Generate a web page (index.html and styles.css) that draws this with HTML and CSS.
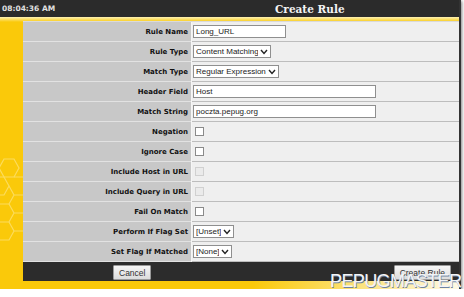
FILE: index.html
```html
<!DOCTYPE html>
<html>
<head>
    <title>Create Rule</title>
    <link rel="stylesheet" href="styles.css">
</head>
<body>
    <div class="frame">
        <div class="topbar">
            <span class="clock">08:04:36 AM</span>
            <span class="title">Create Rule</span>
        </div>
        <div class="stage">
            <form class="rule-form">
                <div class="row">
                    <label>Rule Name</label>
                    <div class="val"><input type="text" class="short" value="Long_URL"></div>
                </div>
                <div class="row">
                    <label>Rule Type</label>
                    <div class="val"><select class="sel-type"><option>Content Matching</option></select></div>
                </div>
                <div class="row">
                    <label>Match Type</label>
                    <div class="val"><select class="sel-match"><option>Regular Expression</option></select></div>
                </div>
                <div class="row">
                    <label>Header Field</label>
                    <div class="val"><input type="text" class="long" value="Host"></div>
                </div>
                <div class="row">
                    <label>Match String</label>
                    <div class="val"><input type="text" class="long" value="poczta.pepug.org"></div>
                </div>
                <div class="row">
                    <label>Negation</label>
                    <div class="val"><input type="checkbox"></div>
                </div>
                <div class="row">
                    <label>Ignore Case</label>
                    <div class="val"><input type="checkbox"></div>
                </div>
                <div class="row">
                    <label>Include Host in URL</label>
                    <div class="val"><input type="checkbox" disabled></div>
                </div>
                <div class="row">
                    <label>Include Query in URL</label>
                    <div class="val"><input type="checkbox" disabled></div>
                </div>
                <div class="row">
                    <label>Fail On Match</label>
                    <div class="val"><input type="checkbox"></div>
                </div>
                <div class="row">
                    <label>Perform If Flag Set</label>
                    <div class="val"><select class="sel-flag"><option>[Unset]</option></select></div>
                </div>
                <div class="row">
                    <label>Set Flag If Matched</label>
                    <div class="val"><select class="sel-flag2"><option>[None]</option></select></div>
                </div>
                <div class="actions">
                    <button type="button" class="btn">Cancel</button>
                    <button type="button" class="btn">Create Rule</button>
                </div>
            </form>
            <div class="watermark">PEPUGMASTER</div>
        </div>
    </div>
</body>
</html>
```

FILE: styles.css
```css
body {
    margin: 0;
    background-color: #fff;
    font-family: "DejaVu Sans", Verdana, sans-serif;
}
.frame {
    width: 459px;
    height: 289px;
    border-right: 2px solid #333;
    box-shadow: 1px 1px 3px rgba(0,0,0,0.5);
    display: flex;
    flex-direction: column;
}
.topbar {
    height: 17px;
    background-color: #2b2b2b;
    display: flex;
    align-items: center;
}
.clock {
    width: 275px;
    padding-left: 2px;
    box-sizing: border-box;
    color: #e0e0e0;
    font-size: 7.5px;
    font-weight: bold;
}
.title {
    color: #f4f4f4;
    font-family: "DejaVu Serif", Georgia, serif;
    font-weight: bold;
    font-size: 10.5px;
}
.stage {
    position: relative;
    flex: 1;
    padding: 4px 0 8px 23px;
    background-color: #fac90a;
    background-image:
        linear-gradient(to bottom, #fdf1b4 0, rgba(250,201,10,0) 5px),
        linear-gradient(to right, rgba(255,255,255,0) 55%, rgba(255,255,255,0.9) 100%),
        url("data:image/svg+xml,%3Csvg xmlns='http://www.w3.org/2000/svg' width='24' height='110'%3E%3Cg fill='none' stroke='%23fcdc5c' stroke-width='1.2'%3E%3Cpath d='M4 2 L14 2 L19 11 L14 20 L4 20 L-1 11 Z'/%3E%3Cpath d='M-5 20 L4 20 L9 29 L4 38 L-5 38'/%3E%3Cpath d='M14 20 L24 20 M14 38 L24 38 M9 29 L14 38 L9 47 L-1 47 L-6 38'/%3E%3Cpath d='M9 47 L14 56 L9 65 L-1 65 L-6 56 M14 56 L24 56'/%3E%3Cpath d='M9 65 L14 74 L9 83 L-1 83 M14 74 L24 74'/%3E%3C/g%3E%3C/svg%3E");
    background-size: 100% 100%, 100% 8px, 24px 110px;
    background-position: 0 0, 0 100%, 0 140px;
    background-repeat: no-repeat, no-repeat, no-repeat;
}
.rule-form {
    margin: 0;
    border-top: 1px solid #dadada;
}
.row {
    display: grid;
    grid-template-columns: 168px 1fr;
    column-gap: 1px;
    background-color: #f6f6f6;
}
.row label {
    height: 19px;
    border-bottom: 1px solid #e2e2e2;
    background-color: #c8c8c8;
    color: #111;
    font-size: 7px;
    font-weight: bold;
    display: flex;
    align-items: center;
    justify-content: flex-end;
    padding-right: 3px;
}
.val {
    height: 19px;
    border-bottom: 1px solid #bdbdbd;
    background-color: #efefef;
    display: flex;
    align-items: center;
    padding-left: 1px;
}
input[type=text], select {
    height: 13px;
    box-sizing: border-box;
    border: 1px solid #8f8f8f;
    background-color: #fff;
    font-family: "Liberation Sans", Arial, sans-serif;
    font-size: 8px;
    color: #222;
    padding: 0 2px;
    margin: 0;
}
.short { width: 93px; }
.long { width: 183px; }
select {
    appearance: none;
    border-radius: 0;
    padding-right: 12px;
    background-image: url("data:image/svg+xml,%3Csvg xmlns='http://www.w3.org/2000/svg' width='8' height='6'%3E%3Cpath d='M1 1 L4 4.5 L7 1' fill='none' stroke='%23222' stroke-width='1.4'/%3E%3C/svg%3E");
    background-repeat: no-repeat;
    background-position: right 2px center;
}
.sel-type { width: 78px; }
.sel-match { width: 86px; }
.sel-flag { width: 41px; }
.sel-flag2 { width: 39px; }
input[type=checkbox] {
    appearance: none;
    width: 9px;
    height: 9px;
    margin: 0 0 0 2px;
    border: 1px solid #8a8a8a;
    background-color: #fff;
}
input[type=checkbox]:disabled {
    border-color: #d0d0d0;
    background-color: #ebebeb;
}
.actions {
    height: 19px;
    background-color: #2c2c2c;
    display: flex;
    justify-content: space-between;
    padding: 3px 8px 0 90px;
    box-sizing: border-box;
}
.btn {
    height: 15px;
    padding: 0 5px;
    font-family: "Liberation Sans", Arial, sans-serif;
    font-size: 8.5px;
    color: #333;
    border: 1px solid #9a9a9a;
    border-radius: 1px;
    background: linear-gradient(#f6f6f6, #dcdcdc);
}
.watermark {
    position: absolute;
    left: 330px;
    top: 255px;
    font-family: "Liberation Sans", Arial, sans-serif;
    font-size: 18px;
    line-height: 18px;
    letter-spacing: -0.6px;
    color: #f2f4f7;
    text-shadow: 0.6px 0.6px 0 #6f83a0;
}
```
